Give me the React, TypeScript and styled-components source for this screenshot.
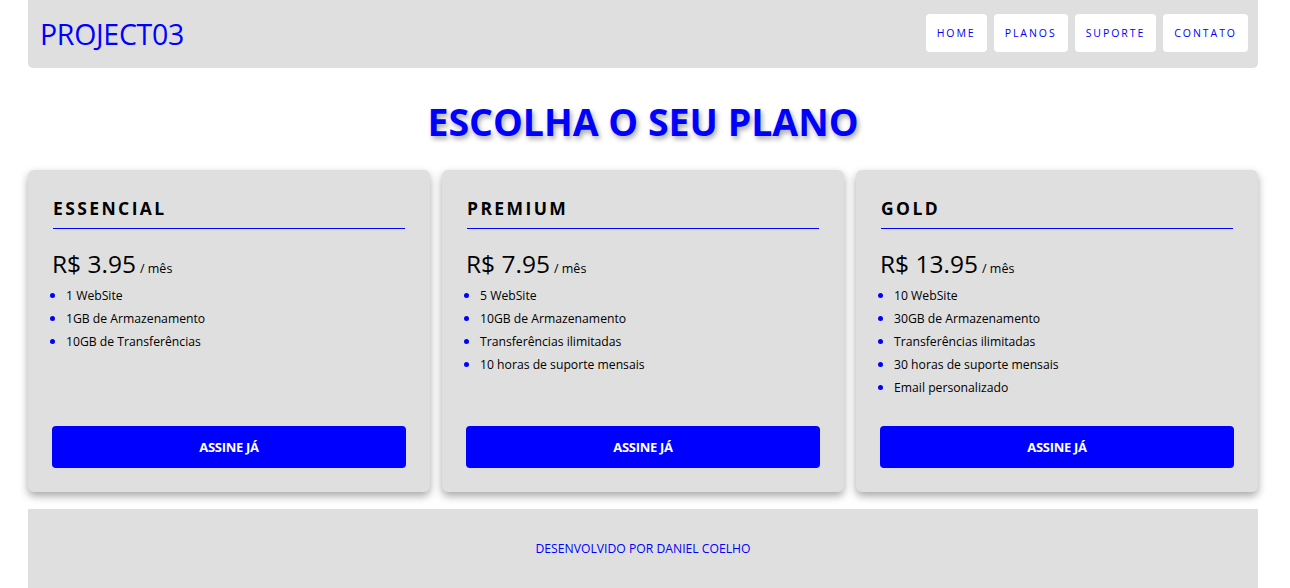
import React from "react";
import styled, { createGlobalStyle } from "styled-components";

const Global = createGlobalStyle`
  * { box-sizing: border-box; }
  body { margin: 0; background: #fff; font-family: "Open Sans", "Noto Sans", sans-serif; }
`;

const Page = styled.div`
  width: 1230px;
  margin-left: 28px;
  display: flex;
  flex-direction: column;
`;

const Header = styled.header`
  height: 68px;
  background: #dfdfdf;
  border-radius: 0 0 5px 5px;
  display: flex;
  align-items: center;
  justify-content: space-between;
  padding: 0 10px 0 12px;
`;

const Logo = styled.div`
  color: #0000ff;
  font-size: 28.5px;
  letter-spacing: -0.3px;
  line-height: 1;
`;

const Nav = styled.nav`
  display: flex;
  gap: 7px;
  margin-top: -2px;
`;

const NavButton = styled.a`
  height: 38px;
  padding: 0 11px;
  background: #fff;
  border-radius: 4px;
  display: flex;
  align-items: center;
  color: #0000ff;
  font-size: 10.5px;
  letter-spacing: 1.95px;
  text-decoration: none;
`;

const Title = styled.h1`
  margin: 0;
  padding: 30px 0 24px;
  text-align: center;
  color: #0000ff;
  font-size: 37.5px;
  font-weight: 700;
  line-height: 48px;
  text-shadow: 2px 3px 5px rgba(0, 0, 0, 0.35);
`;

const Cards = styled.section`
  display: grid;
  grid-template-columns: repeat(3, 1fr);
  gap: 12px;
`;

const Card = styled.article`
  height: 322px;
  background: #dfdfdf;
  border-radius: 6px;
  box-shadow: 0 4px 8px rgba(0, 0, 0, 0.35);
  padding: 26px 24px 24px;
  display: flex;
  flex-direction: column;
`;

const PlanName = styled.h2`
  margin: 0 1px;
  padding: 0 0 8px;
  border-bottom: 1px solid #0000ff;
  font-size: 17.5px;
  font-weight: 700;
  letter-spacing: 2.4px;
  line-height: 24px;
  color: #000;
`;

const Price = styled.div`
  margin-top: 20px;
  color: #000;
  font-size: 24.5px;
  line-height: 30px;
`;

const Per = styled.span`
  margin-left: 4px;
  font-size: 12.5px;
`;

const Features = styled.ul`
  margin: 0;
  padding: 0 0 0 14px;
  flex: 1;
  list-style: none;
`;

const Feature = styled.li`
  position: relative;
  font-size: 12.2px;
  line-height: 23px;
  color: #000;
  &::before {
    content: "";
    position: absolute;
    left: -16px;
    top: 9px;
    width: 5px;
    height: 5px;
    border-radius: 50%;
    background: #0000ff;
  }
`;

const Subscribe = styled.button`
  height: 42px;
  width: 100%;
  border: none;
  border-radius: 4px;
  background: #0000ff;
  color: #fff;
  font-family: inherit;
  font-size: 13px;
  font-weight: 700;
  letter-spacing: -0.3px;
`;

const Footer = styled.footer`
  margin-top: 17px;
  height: 79px;
  background: #dfdfdf;
  display: flex;
  align-items: center;
  justify-content: center;
  color: #0000ff;
  font-size: 12.2px;
`;

const plans = [
  { name: "ESSENCIAL", price: "3.95", items: ["1 WebSite", "1GB de Armazenamento", "10GB de Transferências"] },
  { name: "PREMIUM", price: "7.95", items: ["5 WebSite", "10GB de Armazenamento", "Transferências ilimitadas", "10 horas de suporte mensais"] },
  { name: "GOLD", price: "13.95", items: ["10 WebSite", "30GB de Armazenamento", "Transferências ilimitadas", "30 horas de suporte mensais", "Email personalizado"] },
];

export default function App() {
  return (
    <>
      <Global />
      <Page>
        <Header>
          <Logo>PROJECT03</Logo>
          <Nav>
            {["HOME", "PLANOS", "SUPORTE", "CONTATO"].map((n) => (
              <NavButton key={n}>{n}</NavButton>
            ))}
          </Nav>
        </Header>
        <Title>ESCOLHA O SEU PLANO</Title>
        <Cards>
          {plans.map((p) => (
            <Card key={p.name}>
              <PlanName>{p.name}</PlanName>
              <Price>
                R$ {p.price}
                <Per>/ mês</Per>
              </Price>
              <Features>
                {p.items.map((i) => (
                  <Feature key={i}>{i}</Feature>
                ))}
              </Features>
              <Subscribe>ASSINE JÁ</Subscribe>
            </Card>
          ))}
        </Cards>
        <Footer>DESENVOLVIDO POR DANIEL COELHO</Footer>
      </Page>
    </>
  );
}
